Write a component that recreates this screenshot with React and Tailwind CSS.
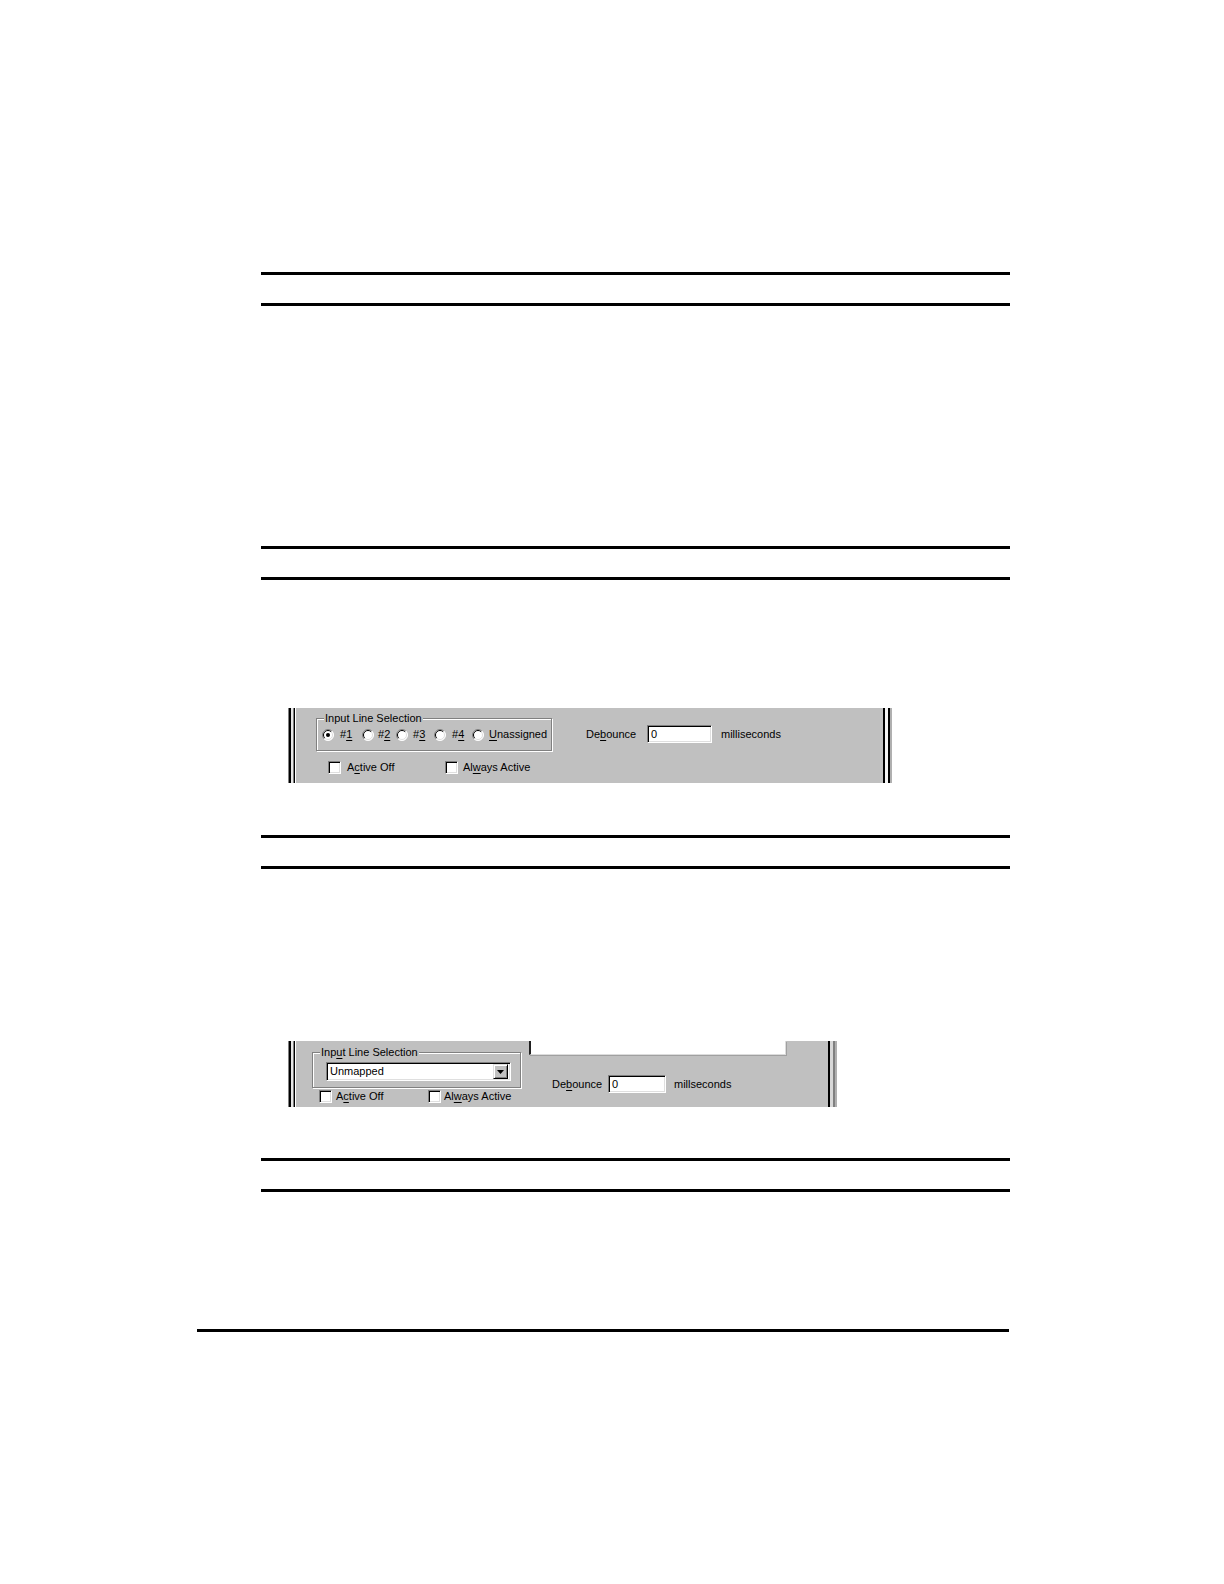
import React from "react";

const FONT = { fontFamily: '"Liberation Sans", Arial, sans-serif' };

function Radio({ checked }) {
  return (
    <svg width="12" height="12" viewBox="0 0 12 12" className="shrink-0">
      <circle cx="6" cy="6" r="5.5" fill="#fff" />
      <path d="M2.1 9.9 A5.5 5.5 0 0 1 9.9 2.1" stroke="#808080" strokeWidth="1" fill="none" />
      <path d="M9.9 2.1 A5.5 5.5 0 0 1 2.1 9.9" stroke="#ffffff" strokeWidth="1" fill="none" />
      <path d="M2.8 9.2 A4.5 4.5 0 0 1 9.2 2.8" stroke="#000" strokeWidth="1" fill="none" />
      <path d="M9.2 2.8 A4.5 4.5 0 0 1 2.8 9.2" stroke="#dfdfdf" strokeWidth="1" fill="none" />
      {checked && <circle cx="6" cy="6" r="2" fill="#000" />}
    </svg>
  );
}

function Check() {
  return (
    <div className="w-[13px] h-[13px] shrink-0 bg-white border border-t-[#808080] border-l-[#808080] border-r-white border-b-white shadow-[inset_1px_1px_0_#000,inset_-1px_-1px_0_#dfdfdf]" />
  );
}

function Sunken({ className, children }) {
  return (
    <div
      className={
        "bg-white border border-t-[#808080] border-l-[#808080] border-r-white border-b-white shadow-[inset_1px_1px_0_#000,inset_-1px_-1px_0_#dfdfdf] flex items-center " +
        className
      }
    >
      {children}
    </div>
  );
}

function U({ children }) {
  return <span className="underline underline-offset-[2px]">{children}</span>;
}

function Rule({ className = "" }) {
  return <div className={"ml-[261px] w-[749px] h-[3px] bg-black " + className} />;
}

function LeftEdge() {
  return (
    <div className="flex h-full shrink-0">
      <div className="w-[1px] bg-[#808080]" />
      <div className="w-[2px] bg-black" />
      <div className="w-[2px] bg-[#e8e8e8]" />
      <div className="w-[1px] bg-[#808080]" />
      <div className="w-[1px] bg-black" />
      <div className="w-[1px] bg-white" />
      <div className="w-[2px] bg-[#c0c0c0]" />
    </div>
  );
}

function RightEdge({ light }) {
  return (
    <div className="flex h-full shrink-0">
      <div className="w-[2px] bg-black" />
      <div className={"w-[3px] " + (light ? "bg-[#f4f4f4]" : "bg-[#d8d8d8]")} />
      <div className={"w-[2px] " + (light ? "bg-black" : "bg-[#808080]")} />
      <div className="w-[2px] bg-[#b0b0b0]" />
    </div>
  );
}

function Panel1() {
  return (
    <div className="ml-[288px] w-[604px] h-[75px] bg-[#c0c0c0] flex text-[11px] leading-[13px] text-black overflow-hidden">
      <LeftEdge />
      <div className="flex-1 flex items-start">
        <div className="flex flex-col ml-[18px]">
          <div className="relative mt-[10px] w-[236px] h-[33px] border border-[#808080] shadow-[inset_1px_1px_0_#fff,1px_1px_0_#fff] flex items-center pl-[5px]">
            <span className="absolute -top-[7px] left-[7px] bg-[#c0c0c0] px-[1px]">Input Line Selection</span>
            <div className="flex items-center w-[40px]">
              <Radio checked />
              <span className="ml-[6px]">#<U>1</U></span>
            </div>
            <div className="flex items-center w-[34px]">
              <Radio />
              <span className="ml-[4px]">#<U>2</U></span>
            </div>
            <div className="flex items-center w-[38px]">
              <Radio />
              <span className="ml-[5px]">#<U>3</U></span>
            </div>
            <div className="flex items-center w-[38px]">
              <Radio />
              <span className="ml-[6px]">#<U>4</U></span>
            </div>
            <div className="flex items-center">
              <Radio />
              <span className="ml-[5px]"><U>U</U>nassigned</span>
            </div>
          </div>
          <div className="flex items-center mt-[9px] h-[14px]">
            <div className="flex items-center ml-[12px] w-[117px]">
              <Check />
              <span className="ml-[6px]">A<U>c</U>tive Off</span>
            </div>
            <div className="flex items-center">
              <Check />
              <span className="ml-[5px]">Al<U>w</U>ays Active</span>
            </div>
          </div>
        </div>
        <div className="flex items-center mt-[17px] h-[18px] ml-[34px]">
          <span className="w-[61px]">De<U>b</U>ounce</span>
          <Sunken className="w-[65px] h-[18px] pl-[3px]">0</Sunken>
          <span className="ml-[9px]">milliseconds</span>
        </div>
      </div>
      <RightEdge light />
    </div>
  );
}

function Panel2() {
  return (
    <div className="ml-[288px] w-[549px] h-[66px] bg-[#c0c0c0] flex text-[11px] leading-[13px] text-black overflow-hidden">
      <LeftEdge />
      <div className="flex-1 flex items-start">
        <div className="flex flex-col ml-[14px]">
          <div className="relative mt-[11px] w-[209px] h-[36px] border border-[#808080] shadow-[inset_1px_1px_0_#fff,1px_1px_0_#fff] pl-[13px] pt-[9px]">
            <span className="absolute -top-[7px] left-[7px] bg-[#c0c0c0] px-[1px]">
              Inp<U>u</U>t Line Selection
            </span>
            <Sunken className="w-[185px] h-[19px] pl-[3px] justify-between pr-[2px]">
              <span>Unmapped</span>
              <div className="w-[15px] h-[15px] bg-[#c0c0c0] border border-t-[#dfdfdf] border-l-[#dfdfdf] border-r-black border-b-black shadow-[inset_1px_1px_0_#fff,inset_-1px_-1px_0_#808080] flex items-center justify-center">
                <svg width="7" height="4" viewBox="0 0 7 4">
                  <path d="M0 0 H7 L3.5 4 Z" fill="#000" />
                </svg>
              </div>
            </Sunken>
          </div>
          <div className="flex items-center mt-[1px] h-[14px]">
            <div className="flex items-center ml-[7px] w-[109px]">
              <Check />
              <span className="ml-[4px]">A<U>c</U>tive Off</span>
            </div>
            <div className="flex items-center">
              <Check />
              <span className="ml-[3px]">Al<U>w</U>ays Active</span>
            </div>
          </div>
        </div>
        <div className="flex flex-col ml-[8px]">
          <div className="w-[257px] h-[14px] bg-white border-l-[2px] border-l-[#202020] border-r border-r-[#dcdcdc] border-b border-b-[#dcdcdc] shadow-[1px_1px_0_#a0a0a0]" />
          <div className="flex items-center mt-[20px] h-[18px] ml-[23px]">
            <span className="w-[56px]">De<U>b</U>ounce</span>
            <Sunken className="w-[58px] h-[18px] pl-[3px]">0</Sunken>
            <span className="ml-[8px]">millseconds</span>
          </div>
        </div>
      </div>
      <RightEdge />
    </div>
  );
}

export default function App() {
  return (
    <div className="w-[1224px] h-[1584px] bg-white overflow-hidden" style={FONT}>
      <div className="pt-[272px]">
        <Rule />
        <Rule className="mt-[28px]" />
        <Rule className="mt-[240px]" />
        <Rule className="mt-[28px]" />
        <div className="mt-[128px]">
          <Panel1 />
        </div>
        <Rule className="mt-[52px]" />
        <Rule className="mt-[28px]" />
        <div className="mt-[172px]">
          <Panel2 />
        </div>
        <Rule className="mt-[51px]" />
        <Rule className="mt-[28px]" />
        <div className="mt-[137px] ml-[197px] w-[812px] h-[3px] bg-black" />
      </div>
    </div>
  );
}
